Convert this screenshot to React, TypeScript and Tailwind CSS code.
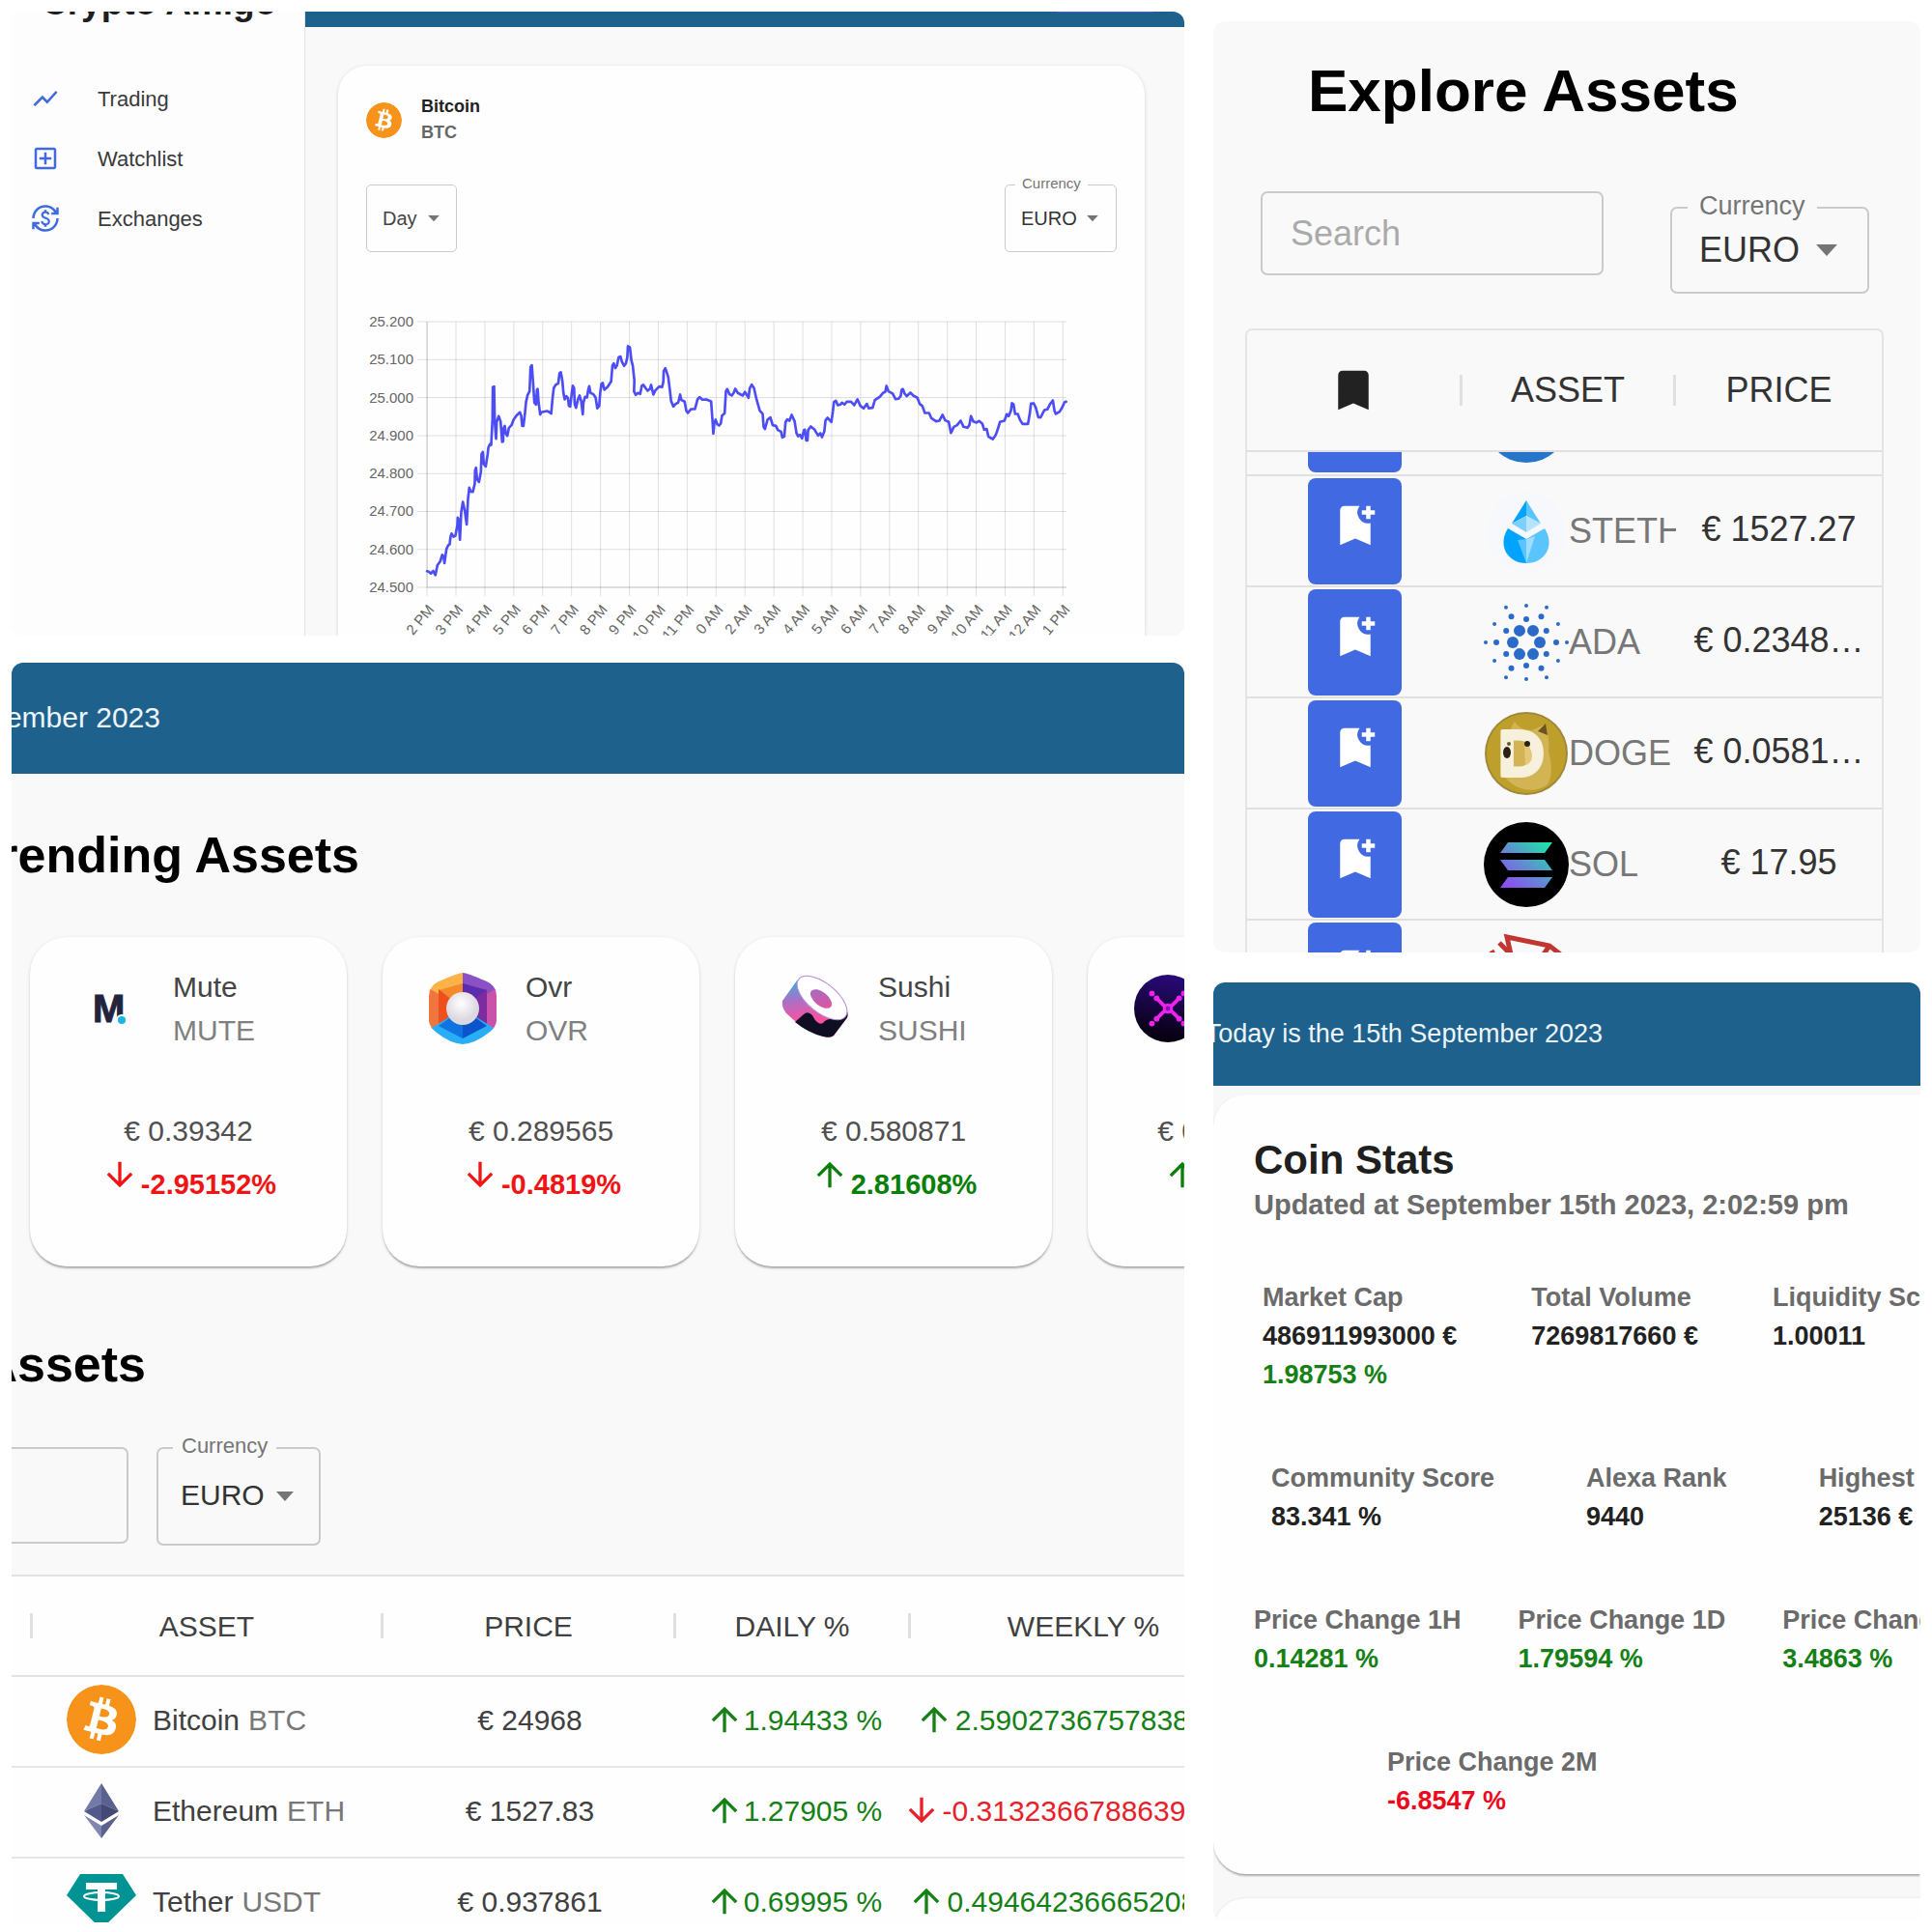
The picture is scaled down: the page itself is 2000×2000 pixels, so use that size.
import React from "react";
import {
  MdShowChart,
  MdOutlineAddBox,
  MdCurrencyExchange,
  MdBookmark,
  MdBookmarkAdd,
  MdArrowUpward,
  MdArrowDownward,
} from "react-icons/md";
import { SiBitcoin } from "react-icons/si";

/* ---------- coin logos ---------- */

function BitcoinLogo({ className }: { className: string }) {
  return <SiBitcoin className={`${className} rounded-full bg-white text-[#f7931a]`} aria-label="Bitcoin" />;
}

function EthereumLogo({ className }: { className: string }) {
  return (
    <svg viewBox="0 0 72 72" className={className} aria-label="Ethereum">
      <path d="M36 8 18 37l18-8z" fill="#747aa8" />
      <path d="M36 8v21l18 8z" fill="#5b618f" />
      <path d="M18 37 36 29v19z" fill="#53598a" />
      <path d="M54 37 36 29v19z" fill="#434874" />
      <path d="M18 41 36 52v13z" fill="#8187b0" />
      <path d="M54 41 36 52v13z" fill="#5b618f" />
    </svg>
  );
}

function TetherLogo({ className }: { className: string }) {
  return (
    <svg viewBox="0 0 72 72" className={className} aria-label="Tether">
      <path d="M14 8h44l14 22-36 35L0 30z" fill="#009393" />
      <path d="M20 17h32v7H40v23h-8V24H20z" fill="#fff" />
      <ellipse cx="36" cy="31" rx="18" ry="4" fill="none" stroke="#fff" strokeWidth="2" />
    </svg>
  );
}

function MuteLogo({ className }: { className: string }) {
  return (
    <svg viewBox="0 0 70 74" className={className} aria-label="Mute">
      <text
        x="17"
        y="51"
        fontSize="40"
        fontWeight="700"
        fill="#22243d"
        stroke="#22243d"
        strokeWidth="1"
        fontFamily="Liberation Sans, sans-serif"
      >
        M
      </text>
      <circle cx="47" cy="49" r="6" fill="#fefefe" />
      <circle cx="47" cy="49" r="4" fill="#17b6e8" />
    </svg>
  );
}

function OvrLogo({ className }: { className: string }) {
  return (
    <svg viewBox="0 0 70 74" className={className} aria-label="Ovr">
      <defs>
        <clipPath id="ovrClip">
          <path d="M35 0Q39 0 60 9Q70 14 70 24V50Q69 57 62 62Q48 73 35 74Q22 73 8 62Q1 57 0 50V24Q0 14 10 9Q31 0 35 0z" />
        </clipPath>
        <radialGradient id="ovrBall" cx="45%" cy="35%">
          <stop offset="0" stopColor="#fff" />
          <stop offset="1" stopColor="#dcd8e0" />
        </radialGradient>
      </defs>
      <g clipPath="url(#ovrClip)">
        <path d="M0 0h35v37L0 18z" fill="#fbb247" />
        <path d="M35 11 10 18 35 37z" fill="#f58a2c" />
        <path d="M0 16l35 21L0 60z" fill="#f0763f" />
        <path d="M10 17l25 20-25 18z" fill="#ee4f1d" />
        <path d="M35 0h35v18L35 37z" fill="#8b4fc6" />
        <path d="M35 11l25 7-25 19z" fill="#5b2cae" />
        <path d="M70 16 35 37l35 23z" fill="#cb52ab" />
        <path d="M60 17 35 37l25 18z" fill="#7d2c9d" />
        <path d="M0 59 35 37l35 22v15H0z" fill="#29aef5" />
        <path d="M10 55l25-18v31z" fill="#0f74e0" />
        <path d="M60 55 35 37v31z" fill="#0b55cc" />
      </g>
      <circle cx="35" cy="37" r="17" fill="url(#ovrBall)" />
    </svg>
  );
}

function SushiLogo({ className }: { className: string }) {
  return (
    <svg viewBox="-1 -5 70 74" className={className} aria-label="Sushi">
      <defs>
        <linearGradient id="sushiBody" gradientUnits="userSpaceOnUse" x1="18" y1="0" x2="24" y2="44">
          <stop offset="0" stopColor="#2fb4e8" />
          <stop offset="0.5" stopColor="#a871c6" />
          <stop offset="1" stopColor="#fa52a0" />
        </linearGradient>
        <linearGradient id="sushiFill" gradientUnits="userSpaceOnUse" x1="30" y1="14" x2="50" y2="30">
          <stop offset="0" stopColor="#a56cc4" />
          <stop offset="1" stopColor="#e2559f" />
        </linearGradient>
      </defs>
      <path d="M15 3Q19-1 27 1L66 34Q69 40 65 44L53 60Q50 63 42 61Q22 55 4 37Q-1 31 0 24z" fill="url(#sushiBody)" />
      <path d="M13 46 22 38Q26 34 31 39Q36 50 42 47Q46 42 54 43Q64 43 67 35Q69 40 65 44L53 60Q50 63 42 61Q26 57 13 46z" fill="#0e0f23" />
      <ellipse cx="41" cy="21" rx="31" ry="15" transform="rotate(39 41 21)" fill="#fff" stroke="#b98ad8" strokeWidth="1" />
      <ellipse cx="40" cy="22" rx="13" ry="7" transform="rotate(39 40 22)" fill="url(#sushiFill)" />
    </svg>
  );
}

function NodesLogo({ className }: { className: string }) {
  return (
    <svg viewBox="0 0 72 72" className={className} aria-label="Token">
      <defs>
        <linearGradient id="nodesBg" x1="0.6" y1="0" x2="0.4" y2="1">
          <stop offset="0" stopColor="#2a0a7c" />
          <stop offset="1" stopColor="#040008" />
        </linearGradient>
      </defs>
      <circle cx="36" cy="36" r="36" fill="url(#nodesBg)" />
      <g stroke="#ee22ea" strokeWidth="4" fill="#ee22ea">
        <path d="M24 25 33 34M48 25 39 34M24 47 33 38M48 47 39 38" strokeLinecap="round" />
        <circle cx="36" cy="36" r="4" fill="#8012b8" strokeWidth="3" />
        {[19, 53].map((x) =>
          [20, 52].map((y) => <circle key={`${x}-${y}`} cx={x} cy={y} r="3" strokeWidth="0" />)
        )}
        {[24, 48].map((x) =>
          [25, 47].map((y) => <circle key={`${x}-${y}`} cx={x} cy={y} r="3" strokeWidth="0" />)
        )}
      </g>
    </svg>
  );
}

function LidoLogo({ className }: { className: string }) {
  return (
    <svg viewBox="0 0 88 88" className={className} aria-label="Lido Staked Ether">
      <circle cx="44" cy="44" r="41" fill="#f6f8fb" />
      <path d="M44 12 29 36l15-8z" fill="#00a3ff" />
      <path d="M44 12v16l15 8z" fill="#5ac4fd" />
      <path d="M29 36 44 28v17z" fill="#7ed0fc" />
      <path d="M59 36 44 28v17z" fill="#b6e4fd" />
      <path d="M25 41 44 52v25C24 77 14 58 25 41z" fill="#00a3ff" />
      <path d="M63 41 44 52v25C64 77 74 58 63 41z" fill="#5ac4fd" />
      <path d="M44 52v25l-9-24z" fill="#5ac4fd" />
      <path d="M44 52v25l9-28z" fill="#9fdcfe" />
    </svg>
  );
}

const ADA_RINGS = [
  { r: 14, dot: 6, odd: false },
  { r: 24, dot: 3, odd: true },
  { r: 31, dot: 3, odd: false },
  { r: 38, dot: 2, odd: true },
  { r: 42, dot: 2, odd: false },
];

function AdaLogo({ className }: { className: string }) {
  return (
    <svg viewBox="0 0 88 88" className={className} aria-label="Cardano">
      {ADA_RINGS.map((ring) =>
        [0, 1, 2, 3, 4, 5].map((i) => {
          const a = ((i * 60 + (ring.odd ? 30 : 0)) * Math.PI) / 180;
          return (
            <circle
              key={`${ring.r}-${i}`}
              cx={44 + ring.r * Math.cos(a)}
              cy={44 + ring.r * Math.sin(a)}
              r={ring.dot}
              fill="#2a6bca"
            />
          );
        })
      )}
    </svg>
  );
}

function DogeLogo({ className }: { className: string }) {
  return (
    <svg viewBox="0 0 88 88" className={className} aria-label="Dogecoin">
      <circle cx="44" cy="44" r="43" fill="#a08a3a" />
      <circle cx="44" cy="44" r="41" fill="#bf9f2c" />
      <path d="M20 66C18 46 22 26 32 11c5 8 12 9 18 9l13-6c4 9 5 18 4 28 4 14 4 28-2 35-14 9-34 5-45-11z" fill="#d3b455" />
      <path d="M56 21l8-8 2 12z" fill="#6b5420" />
      <text
        x="15"
        y="67"
        fontSize="66"
        fontWeight="700"
        fill="#f6f0dc"
        stroke="#f6f0dc"
        strokeWidth="4"
        strokeLinejoin="round"
        fontFamily="Liberation Sans, sans-serif"
      >
        D
      </text>
      <path d="M42 34q8 4 8 12t-7 10z" fill="#e3c878" />
      <ellipse cx="24" cy="43" rx="4" ry="6" fill="#2b2115" />
      <circle cx="26" cy="34" r="2" fill="#6b5a30" />
      <circle cx="45" cy="34" r="3" fill="#2b2115" />
    </svg>
  );
}

function SolLogo({ className }: { className: string }) {
  return (
    <svg viewBox="0 0 88 88" className={className} aria-label="Solana">
      <defs>
        <linearGradient id="solBars" gradientUnits="userSpaceOnUse" x1="24" y1="70" x2="66" y2="20">
          <stop offset="0" stopColor="#8f48f5" />
          <stop offset="0.5" stopColor="#5f8fd0" />
          <stop offset="1" stopColor="#19e9a6" />
        </linearGradient>
      </defs>
      <circle cx="44" cy="44" r="44" fill="#000" />
      <path d="M25 21h46l-8 11H17zM17 39h46l8 11H25zM25 57h46l-8 11H17z" fill="url(#solBars)" />
    </svg>
  );
}

function TronLogo({ className }: { className: string }) {
  return (
    <svg viewBox="0 0 88 88" className={className} aria-label="Tron">
      <g fill="none" stroke="#c23631" strokeWidth="5">
        <path d="M24 4 68 13 82 24 42 84z" />
        <path d="M16 10 48 42 68 13M48 42 42 84M8 18l34 66" />
      </g>
    </svg>
  );
}

/* ---------- shared controls ---------- */

type Size = "sm" | "md" | "lg";

const SELECT_BOX: Record<Size, string> = {
  sm: "h-[70px] w-[116px] rounded-[5px] border",
  md: "h-[102px] w-[170px] rounded-[7px] border-2",
  lg: "h-[90px] w-[206px] rounded-[7px] border-2",
};
const SELECT_TEXT: Record<Size, string> = {
  sm: "pl-4 text-[20px]",
  md: "pb-1 pl-[23px] text-[30px]",
  lg: "pl-7 text-[36px]",
};
const SELECT_LABEL: Record<Size, string> = {
  sm: "left-[10px] px-[7px] text-[15px]",
  md: "left-[15px] px-[9px] text-[22px]",
  lg: "left-[16px] px-[12px] text-[27px]",
};
const SELECT_ARROW: Record<Size, string> = {
  sm: "right-[18px] w-3",
  md: "right-[26px] w-[18px]",
  lg: "right-[31px] w-[22px]",
};

function Caret({ className }: { className: string }) {
  return (
    <svg viewBox="0 0 20 11" className={`pointer-events-none absolute top-1/2 -translate-y-1/2 ${className}`} aria-hidden="true">
      <path d="M0 0h20L10 11z" fill="#757575" />
    </svg>
  );
}

function CurrencySelect({ id, size, surface }: { id: string; size: Size; surface: string }) {
  return (
    <div className={`relative border-[#cacaca] ${SELECT_BOX[size]}`}>
      <label
        htmlFor={id}
        className={`absolute -top-[3px] -translate-y-1/2 leading-none text-[#757575] ${surface} ${SELECT_LABEL[size]}`}
      >
        Currency
      </label>
      <select id={id} className={`h-full w-full appearance-none bg-transparent text-[#333] outline-none ${SELECT_TEXT[size]}`}>
        <option>EURO</option>
      </select>
      <Caret className={SELECT_ARROW[size]} />
    </div>
  );
}

/* ---------- price chart panel ---------- */

const NAV = [
  { label: "Trading", Icon: MdShowChart },
  { label: "Watchlist", Icon: MdOutlineAddBox },
  { label: "Exchanges", Icon: MdCurrencyExchange },
];

const Y_LABELS = ["25.200", "25.100", "25.000", "24.900", "24.800", "24.700", "24.600", "24.500"];
const X_LABELS = [
  "2 PM", "3 PM", "4 PM", "5 PM", "6 PM", "7 PM", "8 PM", "9 PM", "10 PM", "11 PM", "0 AM", "2 AM",
  "3 AM", "4 AM", "5 AM", "6 AM", "7 AM", "8 AM", "9 AM", "10 AM", "11 AM", "12 AM", "1 PM",
];

const SERIES =
  "246,843 252,845 258,850 265,842 272,855 278,825 287,812 293,792 297,796 300,818 306,775 311,763 316,760 319,735 322,726 328,736 334,733 340,700 341,677 344,682 348,745 352,660 357,628 363,655 369,698 373,620 377,584 382,596 388,597 394,572 395,530 398,522 401,558 407,566 413,535 415,480 419,473 422,510 428,518 434,480 436,460 441,449 445,451 447,410 449,370 450,272 454,270 456,380 460,432 462,380 468,362 474,378 479,442 482,440 483,400 487,392 490,415 495,423 500,398 508,390 514,374 522,362 534,350 538,360 541,392 545,392 550,350 553,318 558,296 564,285 567,210 571,204 575,260 579,320 584,326 587,280 589,278 592,320 597,357 600,350 618,346 626,350 631,354 635,310 639,275 645,265 653,260 657,228 661,226 666,255 669,290 673,310 678,300 683,306 686,330 690,332 695,290 698,268 702,275 704,325 708,336 714,310 719,298 724,315 729,356 731,320 736,302 742,304 746,280 749,269 753,290 762,294 769,305 774,338 780,330 783,290 787,262 791,259 796,280 806,271 817,254 821,205 825,198 830,213 835,205 840,180 846,177 850,192 857,206 863,198 867,180 869,145 875,148 880,190 884,205 889,250 888,285 893,296 900,290 907,293 912,268 917,265 930,283 937,278 941,265 948,295 954,282 966,270 975,272 979,255 980,222 985,213 994,240 999,280 1003,315 1010,332 1017,324 1025,320 1031,295 1035,312 1045,317 1050,345 1055,352 1065,340 1077,340 1085,310 1091,303 1100,311 1112,310 1127,316 1131,370 1134,416 1137,385 1141,373 1146,387 1152,391 1157,385 1161,360 1169,353 1173,285 1177,278 1184,294 1191,298 1197,290 1202,277 1210,290 1225,298 1232,287 1243,305 1247,275 1253,264 1260,275 1268,310 1278,345 1287,355 1290,395 1294,402 1302,373 1311,366 1318,390 1328,392 1334,405 1344,410 1348,428 1354,425 1358,380 1363,372 1370,376 1377,358 1386,378 1392,415 1397,424 1403,420 1409,431 1415,405 1418,404 1422,437 1426,437 1428,405 1436,394 1448,404 1459,422 1466,415 1471,427 1478,410 1482,375 1488,367 1500,380 1505,345 1508,318 1514,314 1520,328 1528,326 1533,320 1541,326 1548,317 1561,317 1571,328 1581,310 1590,330 1600,338 1610,324 1616,338 1628,336 1635,312 1650,302 1660,290 1667,287 1671,268 1677,285 1690,292 1699,309 1708,308 1715,300 1718,280 1722,278 1727,292 1734,300 1745,289 1755,299 1767,305 1774,324 1782,330 1790,352 1803,352 1810,368 1825,378 1835,376 1845,358 1853,375 1864,380 1871,414 1880,395 1890,390 1901,376 1910,395 1922,398 1928,390 1933,362 1940,378 1950,382 1958,377 1968,385 1974,404 1982,402 1987,425 1995,430 2001,433 2010,420 2017,400 2023,380 2037,376 2044,356 2050,362 2057,345 2060,322 2065,325 2070,355 2078,355 2086,375 2093,386 2110,386 2116,350 2119,323 2127,322 2134,335 2142,365 2149,366 2161,343 2170,341 2178,325 2187,313 2192,345 2196,355 2208,348 2216,335 2223,319 2228,317";

const GRID_LEFT = 63;
const GRID_TOP = 16;
const STEP_X = 29.88;
const STEP_Y = 39.24;

function PriceChart() {
  const bottom = GRID_TOP + STEP_Y * 7;
  return (
    <svg viewBox="0 0 776 341" className="mt-14 block w-full" role="img" aria-label="Bitcoin price over one day">
      <g stroke="#000" strokeOpacity="0.12" strokeWidth="1">
        {Y_LABELS.map((l, i) => (
          <line key={l} x1={GRID_LEFT - 10} x2={724} y1={GRID_TOP + i * STEP_Y} y2={GRID_TOP + i * STEP_Y} />
        ))}
        {X_LABELS.map((l, i) => (
          <line key={i} x1={GRID_LEFT + i * STEP_X} x2={GRID_LEFT + i * STEP_X} y1={GRID_TOP} y2={bottom + 9} />
        ))}
        <path d={`M${GRID_LEFT} ${GRID_TOP}V${bottom}H724`} fill="none" strokeOpacity="0.15" />
      </g>
      <polyline
        points={SERIES}
        transform="translate(-19 -7) scale(0.33333)"
        fill="none"
        stroke="#4d4df5"
        strokeWidth="8"
        strokeLinejoin="round"
        strokeLinecap="round"
      />
      <g fontSize="15" fill="#666" fontFamily="Liberation Sans, sans-serif" textAnchor="end">
        {Y_LABELS.map((l, i) => (
          <text key={l} x={49} y={GRID_TOP + 5 + i * STEP_Y}>
            {l}
          </text>
        ))}
        {X_LABELS.map((l, i) => {
          const x = GRID_LEFT + 8 + i * STEP_X;
          return (
            <text key={i} x={x} y={314} transform={`rotate(-50 ${x} 314)`}>
              {l}
            </text>
          );
        })}
      </g>
    </svg>
  );
}

function TradingPanel() {
  return (
    <section className="flex overflow-hidden rounded-xl bg-[#f9f9f9]">
      <aside className="w-[304px] shrink-0 border-r border-[#e4e4e4] bg-[#fdfdfd]">
        <h2 className="-mt-[29px] pl-[31px] text-[37px] leading-10 font-bold whitespace-nowrap text-[#1f1f1f]">Crypto Amigo</h2>
        <nav className="mt-12">
          {NAV.map(({ label, Icon }) => (
            <a key={label} href="#" className="flex h-[62px] items-center gap-[39px] pl-5 text-[22px] text-[#3a3a3a]">
              <Icon className="size-[30px] text-[#4169e1]" />
              {label}
            </a>
          ))}
        </nav>
      </aside>
      <div className="min-w-0 flex-1">
        <header className="flex h-4 justify-end bg-[#1f618d] pr-8">
          <span className="h-px w-[100px] rounded-b-sm bg-[#3f5fb8]" />
        </header>
        <div className="mt-10 mr-[41px] ml-[34px] rounded-t-[30px] bg-[#fefefe] px-[29px] pt-[29px] shadow-[0_1px_4px_rgba(0,0,0,0.14)]">
          <div className="flex items-center gap-5">
            <BitcoinLogo className="size-[37px]" />
            <div className="text-[18px] leading-[27px] font-bold">
              <p className="text-[#222]">Bitcoin</p>
              <p className="text-[#666]">BTC</p>
            </div>
          </div>
          <div className="mt-10 flex justify-between">
            <div className="relative h-[70px] w-[94px] rounded-[5px] border border-[#cacaca]">
              <select aria-label="Time range" className="h-full w-full appearance-none bg-transparent pl-4 text-[20px] text-[#444] outline-none">
                <option>Day</option>
              </select>
              <Caret className="right-[17px] w-3" />
            </div>
            <CurrencySelect id="currency-chart" size="sm" surface="bg-[#fefefe]" />
          </div>
          <PriceChart />
        </div>
      </div>
    </section>
  );
}

/* ---------- trending panel ---------- */

const TRENDING = [
  { name: "Mute", symbol: "MUTE", price: "€ 0.39342", change: "-2.95152%", up: false, Logo: MuteLogo },
  { name: "Ovr", symbol: "OVR", price: "€ 0.289565", change: "-0.4819%", up: false, Logo: OvrLogo },
  { name: "Sushi", symbol: "SUSHI", price: "€ 0.580871", change: "2.81608%", up: true, Logo: SushiLogo },
  { name: "", symbol: "", price: "€ 0.00215684", change: "1.58304%", up: true, Logo: NodesLogo },
];

const ASSETS = [
  { name: "Bitcoin", symbol: "BTC", price: "€ 24968", daily: "1.94433 %", weekly: "2.590273675783842 %", up: true, Logo: BitcoinLogo },
  { name: "Ethereum", symbol: "ETH", price: "€ 1527.83", daily: "1.27905 %", weekly: "-0.3132366788639412 %", up: false, Logo: EthereumLogo },
  { name: "Tether", symbol: "USDT", price: "€ 0.937861", daily: "0.69995 %", weekly: "0.4946423666520814 %", up: true, Logo: TetherLogo },
];

function Trend({ up }: { up: boolean }) {
  return up ? <MdArrowUpward className="size-10 shrink-0" /> : <MdArrowDownward className="size-10 shrink-0" />;
}

function HeadCell({ children }: { children: React.ReactNode }) {
  return (
    <th className="p-0 font-normal">
      <div className="flex items-center">
        <span className="flex-1 text-center">{children}</span>
        <span className="h-[26px] w-[3px] bg-[#e0e0e0]" />
      </div>
    </th>
  );
}

function TrendingPanel() {
  return (
    <section className="overflow-hidden rounded-t-xl bg-[#f9f9f9]">
      <header className="flex h-[115px] items-center bg-[#1f618d] pb-0.5">
        <p className="flex w-[154px] justify-end text-[30px] whitespace-nowrap text-[#eef5fa]">Today is the 15th September 2023</p>
      </header>
      <h2 className="mt-[54px] flex w-[360px] justify-end text-[52px] leading-[60px] font-bold whitespace-nowrap text-black">
        Trending Assets
      </h2>
      <div className="mt-[55px] ml-[19px] flex gap-[37px]">
        {TRENDING.map(({ name, symbol, price, change, up, Logo }, i) => (
          <article
            key={i}
            className="w-[328px] shrink-0 rounded-[38px] bg-[#fefefe] pt-[29px] pb-[62px] text-[30px] leading-[45px] shadow-[0_3px_2px_-1px_rgba(0,0,0,0.22),0_1px_2px_rgba(0,0,0,0.12),0_1px_4px_rgba(0,0,0,0.08)]"
          >
            <div className="flex h-[90px] items-center gap-[30px] pl-12">
              <Logo className="h-[74px] w-[70px]" />
              <div>
                <p className="text-[#444]">{name}</p>
                <p className="text-[#808080]">{symbol}</p>
              </div>
            </div>
            <p className="mt-[59px] text-center text-[#505050]">{price}</p>
            <p className={`mt-[3px] flex items-baseline justify-center gap-0.5 text-[29px] font-bold ${up ? "text-[#088008]" : "text-[#f01414]"}`}>
              <Trend up={up} />
              {change}
            </p>
          </article>
        ))}
      </div>
      <h2 className="mt-[71px] flex w-[139px] justify-end text-[52px] leading-[60px] font-bold whitespace-nowrap text-black">
        Explore Assets
      </h2>
      <div className="mt-14 flex items-start gap-[29px]">
        <input aria-label="Search assets" className="h-[100px] w-[121px] rounded-r-[7px] border-2 border-l-0 border-[#cacaca] bg-transparent px-4 text-[30px] outline-none" />
        <CurrencySelect id="currency-trending" size="md" surface="bg-[#f9f9f9]" />
      </div>
      <div className="mt-[30px] -mb-[28px]">
        <table className="w-[1291px] table-fixed border-collapse bg-[#fefefe] text-[30px] text-[#404040]">
          <colgroup>
            <col className="w-[22px]" />
            <col className="w-[363px]" />
            <col className="w-[303px]" />
            <col className="w-[243px]" />
            <col className="w-[360px]" />
          </colgroup>
          <thead>
            <tr className="h-[104px] border-y-2 border-[#e2e2e2]">
              <HeadCell>{""}</HeadCell>
              <HeadCell>ASSET</HeadCell>
              <HeadCell>PRICE</HeadCell>
              <HeadCell>DAILY %</HeadCell>
              <HeadCell>WEEKLY %</HeadCell>
            </tr>
          </thead>
          <tbody>
            {ASSETS.map(({ name, symbol, price, daily, weekly, up, Logo }) => (
              <tr key={symbol} className="h-[94px] border-b-2 border-[#e6e6e6]">
                <td className="p-0" />
                <td className="p-0 pb-1">
                  <div className="flex items-center pl-[35px]">
                    <Logo className="size-[72px]" />
                    <span className="ml-[17px]">{name}</span>
                    <span className="ml-[9px] text-[#777]">{symbol}</span>
                  </div>
                </td>
                <td className="p-0 pb-1 text-center">{price}</td>
                <td className="p-0 pb-1">
                  <div className="flex items-center justify-center text-[#158015]">
                    <Trend up />
                    {daily}
                  </div>
                </td>
                <td className="p-0 pb-1">
                  <div className={`flex items-center justify-center gap-0.5 whitespace-nowrap ${up ? "text-[#158015]" : "text-[#e8202a]"}`}>
                    <Trend up={up} />
                    {weekly}
                  </div>
                </td>
              </tr>
            ))}
          </tbody>
        </table>
      </div>
    </section>
  );
}

/* ---------- explore panel ---------- */

const EXPLORE = [
  { symbol: "STETH", price: "€ 1527.27", Logo: LidoLogo },
  { symbol: "ADA", price: "€ 0.2348…", Logo: AdaLogo },
  { symbol: "DOGE", price: "€ 0.0581…", Logo: DogeLogo },
  { symbol: "SOL", price: "€ 17.95", Logo: SolLogo },
  { symbol: "", price: "", Logo: TronLogo },
];

function ExplorePanel() {
  return (
    <section className="overflow-hidden rounded-xl bg-[#f9f9f9] pt-9">
      <h1 className="pl-[98px] text-[62px] leading-[72px] font-bold text-black">Explore Assets</h1>
      <div className="mt-[68px] flex items-start justify-between pr-[53px] pl-[49px]">
        <input
          type="search"
          aria-label="Search"
          placeholder="Search"
          className="h-[87px] w-[355px] appearance-none rounded-[7px] border-2 border-[#cacaca] bg-transparent pl-[29px] text-[36px] outline-none placeholder:text-[#aaa]"
        />
        <div className="mt-4">
          <CurrencySelect id="currency-explore" size="lg" surface="bg-[#f9f9f9]" />
        </div>
      </div>
      <div className="mt-9 mr-[38px] -mb-[82px] ml-[33px] rounded-t-[7px] border-x-2 border-t-2 border-[#e4e4e4] text-[36px] text-[#333]">
        <table className="w-full table-fixed border-collapse">
          <thead>
            <tr className="h-[125px] border-b-2 border-[#e0e0e0]">
              <th className="w-[223px] p-0">
                <div className="flex items-center">
                  <span className="flex flex-1 justify-center">
                    <MdBookmark className="size-[54px] text-[#222]" />
                  </span>
                  <span className="h-8 w-[3px] bg-[#e0e0e0]" />
                </div>
              </th>
              <th className="w-[221px] p-0 font-normal">
                <div className="flex items-center">
                  <span className="flex-1">ASSET</span>
                  <span className="h-8 w-[3px] bg-[#e0e0e0]" />
                </div>
              </th>
              <th className="p-0 font-normal">PRICE</th>
            </tr>
          </thead>
          <tbody>
            <tr className="border-b-2 border-[#e0e0e0]">
              <td className="p-0">
                <div className="mx-auto mb-[2px] h-[21px] w-[97px] rounded-b-lg bg-[#4169e1]" />
              </td>
              <td className="p-0">
                <div className="flex h-[23px] items-start overflow-hidden pl-[22px]">
                  <span className="-mt-[77px] size-[88px] shrink-0 rounded-full bg-[#2775c9]" />
                </div>
              </td>
              <td className="p-0" />
            </tr>
            {EXPLORE.map(({ symbol, price, Logo }, i) => (
              <tr key={i} className="h-[115px] border-b-2 border-[#e0e0e0]">
                <td className="p-0">
                  <button
                    aria-label={`Add ${symbol} to watchlist`}
                    className="mx-auto flex h-[110px] w-[97px] items-center justify-center rounded-lg bg-[#4169e1] pb-3"
                  >
                    <MdBookmarkAdd className="size-[54px] text-white" />
                  </button>
                </td>
                <td className="p-0">
                  <div className="flex items-center overflow-hidden pl-[22px] text-[#777]">
                    <Logo className="size-[88px] shrink-0" />
                    <span>{symbol}</span>
                  </div>
                </td>
                <td className="p-0 pb-1 text-center whitespace-nowrap">{price}</td>
              </tr>
            ))}
          </tbody>
        </table>
      </div>
    </section>
  );
}

/* ---------- coin stats panel ---------- */

const GREEN = "text-[#158015]";
const RED = "text-[#ea0c1c]";
const DARK = "text-[#222]";

const STATS = [
  {
    layout: "gap-[77px] pl-[9px]",
    items: [
      { label: "Market Cap", lines: [["486911993000 €", DARK], ["1.98753 %", GREEN]] },
      { label: "Total Volume", lines: [["7269817660 €", DARK]] },
      { label: "Liquidity Score", lines: [["1.00011", DARK]] },
    ],
  },
  {
    layout: "gap-[95px] pl-[18px]",
    items: [
      { label: "Community Score", lines: [["83.341 %", DARK]] },
      { label: "Alexa Rank", lines: [["9440", DARK]] },
      { label: "Highest", lines: [["25136 €", DARK]] },
    ],
  },
  {
    layout: "gap-[59px]",
    items: [
      { label: "Price Change 1H", lines: [["0.14281 %", GREEN]] },
      { label: "Price Change 1D", lines: [["1.79594 %", GREEN]] },
      { label: "Price Change 7D", lines: [["3.4863 %", GREEN]] },
    ],
  },
  {
    layout: "pl-[138px]",
    items: [{ label: "Price Change 2M", lines: [["-6.8547 %", RED]] }],
  },
];

function StatsPanel() {
  return (
    <section className="overflow-hidden rounded-xl bg-[#f8f8f8]">
      <header className="flex h-[107px] items-center bg-[#1f618d]">
        <p className="flex w-[403px] justify-end text-[27px] whitespace-nowrap text-[#eef5fa]">Today is the 15th September 2023</p>
      </header>
      <div className="mt-[9px] rounded-l-[34px] bg-[#fefefe] pt-[42px] pb-14 pl-[42px] shadow-[0_3px_2px_-1px_rgba(0,0,0,0.25),0_1px_3px_rgba(0,0,0,0.12)]">
        <h2 className="text-[42px] leading-[52px] font-bold text-[#1f1f1f]">Coin Stats</h2>
        <p className="text-[29px] leading-10 font-bold whitespace-nowrap text-[#6b6b6b]">Updated at September 15th 2023, 2:02:59 pm</p>
        <div className="mt-14 flex flex-col gap-[67px]">
          {STATS.map((row, i) => (
            <div key={i} className={`flex text-[27px] leading-10 font-bold whitespace-nowrap ${row.layout}`}>
              {row.items.map((item) => (
                <dl key={item.label} className="shrink-0">
                  <dt className="text-[#6b6b6b]">{item.label}</dt>
                  {item.lines.map(([text, color]) => (
                    <dd key={text} className={color}>
                      {text}
                    </dd>
                  ))}
                </dl>
              ))}
            </div>
          ))}
        </div>
      </div>
      <div className="mt-[25px] -mb-14 h-20 rounded-tl-[34px] bg-[#fefefe] shadow-[0_0_3px_rgba(0,0,0,0.1)]" />
    </section>
  );
}

export default function App() {
  return (
    <main className="grid grid-cols-[1214fr_732fr] items-start gap-x-[30px] bg-white p-3 font-['Liberation_Sans',Arial,sans-serif]">
      <div className="flex min-w-0 flex-col gap-7">
        <TradingPanel />
        <TrendingPanel />
      </div>
      <div className="flex min-w-0 flex-col gap-[31px] pt-[10px]">
        <ExplorePanel />
        <StatsPanel />
      </div>
    </main>
  );
}
